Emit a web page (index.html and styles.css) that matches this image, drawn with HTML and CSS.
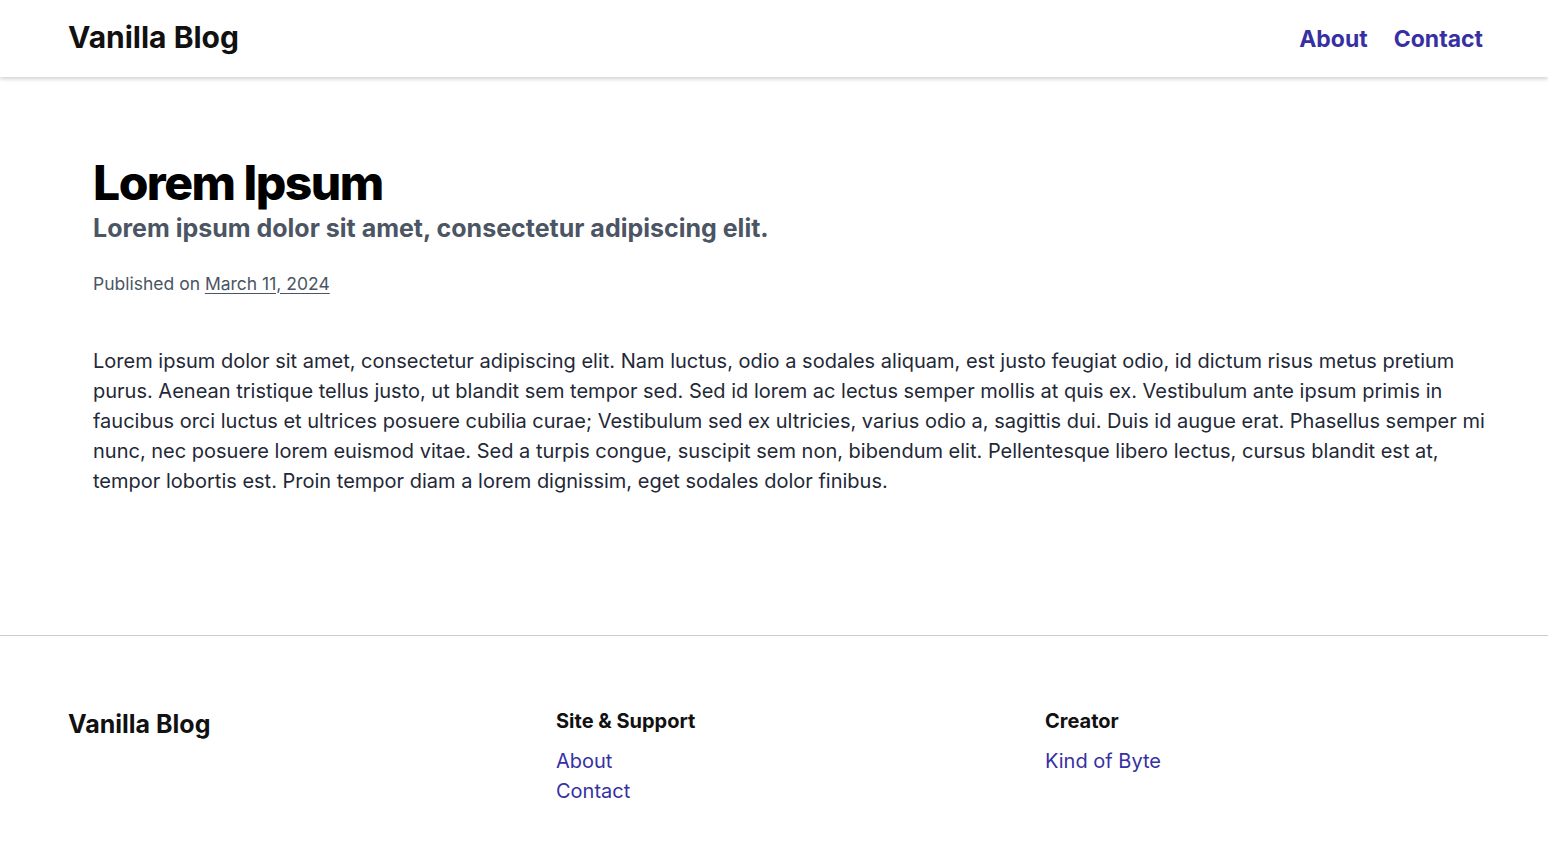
FILE: index.html
```html
<!DOCTYPE html>
<html lang="en">
<head>
<meta charset="utf-8">
<title>Vanilla Blog</title>
<link rel="stylesheet" href="styles.css">
</head>
<body>
<header class="site-header">
  <div class="container header-inner">
    <a class="brand" href="#">Vanilla Blog</a>
    <nav class="main-nav">
      <a href="#">About</a>
      <a href="#">Contact</a>
    </nav>
  </div>
</header>
<main class="container">
  <article class="post">
    <h1 class="post-title">Lorem Ipsum</h1>
    <p class="post-subtitle">Lorem ipsum dolor sit amet, consectetur adipiscing elit.</p>
    <p class="post-meta">Published on <a href="#">March 11, 2024</a></p>
    <p class="post-body">Lorem ipsum dolor sit amet, consectetur adipiscing elit. Nam luctus, odio a sodales aliquam, est justo feugiat odio, id dictum risus metus pretium purus. Aenean tristique tellus justo, ut blandit sem tempor sed. Sed id lorem ac lectus semper mollis at quis ex. Vestibulum ante ipsum primis in faucibus orci luctus et ultrices posuere cubilia curae; Vestibulum sed ex ultricies, varius odio a, sagittis dui. Duis id augue erat. Phasellus semper mi nunc, nec posuere lorem euismod vitae. Sed a turpis congue, suscipit sem non, bibendum elit. Pellentesque libero lectus, cursus blandit est at, tempor lobortis est. Proin tempor diam a lorem dignissim, eget sodales dolor finibus.</p>
  </article>
</main>
<footer class="site-footer">
  <div class="container footer-grid">
    <div class="footer-brand">Vanilla Blog</div>
    <div class="footer-col">
      <h3>Site &amp; Support</h3>
      <a href="#">About</a>
      <a href="#">Contact</a>
    </div>
    <div class="footer-col">
      <h3>Creator</h3>
      <a href="#">Kind of Byte</a>
    </div>
  </div>
</footer>
</body>
</html>
```

FILE: styles.css
```css
* { box-sizing: border-box; }
html, body { margin: 0; padding: 0; }
body {
  font-family: Inter, "Noto Sans", sans-serif;
  color: #111827;
  background: #fff;
}
a { color: #3730a3; text-decoration: none; }
.container {
  padding: 0 65px 0 68px;
}
.site-header {
  height: 77px;
  box-shadow: 0 2px 4px rgba(0,0,0,0.18);
  background: #fff;
}
.header-inner {
  height: 100%;
  display: flex;
  align-items: center;
  justify-content: space-between;
}
.brand {
  color: #111;
  font-weight: 700;
  font-size: 30px;
  margin-top: -3px;
}
.main-nav {
  display: flex;
  gap: 26px;
}
.main-nav a {
  font-weight: 700;
  font-size: 23px;
}
.post {
  padding: 80px 0 0 25px;
  margin-right: -12px;
  min-height: 558px;
}
.post-title {
  margin: 0;
  font-size: 48px;
  font-weight: 800;
  letter-spacing: -1.5px;
  line-height: 1.1;
  color: #000;
}
.post-subtitle {
  margin: 2px 0 0;
  font-size: 25px;
  font-weight: 700;
  color: #4b5563;
  line-height: 1.35;
}
.post-meta {
  margin: 27px 0 0;
  font-size: 17.5px;
  color: #4b5563;
}
.post-meta a {
  color: #4b5563;
  text-decoration: underline;
  text-underline-offset: 3px;
}
.post-body {
  margin: 52px 0 0;
  font-size: 20px;
  line-height: 30px;
  color: #1f2937;
}
.site-footer {
  border-top: 1px solid #ccc;
  padding: 73px 0 40px;
}
.footer-grid {
  display: grid;
  grid-template-columns: 488px 489px 1fr;
}
.footer-brand {
  font-size: 25px;
  font-weight: 700;
  color: #111;
}
.footer-col h3 {
  margin: 0 0 13px;
  font-size: 20px;
  font-weight: 700;
  color: #111;
}
.footer-col a {
  display: block;
  font-size: 20px;
  line-height: 30px;
}
```
